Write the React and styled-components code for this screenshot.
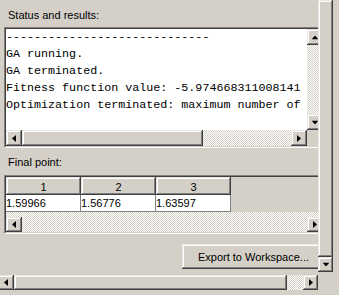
import React from 'react'
import styled, { createGlobalStyle, css } from 'styled-components'

const GlobalStyle = createGlobalStyle`
  html, body {
    margin: 0;
    padding: 0;
    background: #d4d0c8;
  }
  body {
    font-family: "Liberation Sans", Arial, sans-serif;
    font-size: 11px;
    color: #000;
  }
`

const raised = css`
  background: #d4d0c8;
  box-shadow: inset -1px -1px #404040, inset 1px 1px #e8e6e0,
    inset -2px -2px #808080, inset 2px 2px #fff;
`

const dither = css`
  background: repeating-conic-gradient(#fff 0 25%, #d4d0c8 0 50%) 0 0 / 2px 2px;
`

const Window = styled.div`
  width: 339px;
  height: 295px;
  display: grid;
  grid-template-columns: 318px 15px 6px;
  grid-template-rows: 272px 3px 15px 5px;
  background: #d4d0c8;
  overflow: hidden;
`

const Viewport = styled.div`
  grid-column: 1;
  grid-row: 1 / span 2;
  overflow: hidden;
  padding-left: 4px;
  display: flex;
  flex-direction: column;
`

const Label = styled.div`
  margin: ${p => p.$top}px 0 ${p => p.$bottom}px 4px;
  line-height: 13px;
  white-space: nowrap;
`

const Frame = styled.div`
  flex-shrink: 0;
  width: 321px;
  height: ${p => p.$height}px;
  box-sizing: border-box;
  border: 1px solid;
  border-color: #808080 #fff #fff #808080;
`

const FrameInner = styled.div`
  height: 100%;
  box-sizing: border-box;
  border: 1px solid;
  border-color: #404040 #d4d0c8 #d4d0c8 #404040;
  display: grid;
  grid-template-columns: ${p => p.$cols};
  grid-template-rows: ${p => p.$rows};
  background: #d4d0c8;
`

const Console = styled.pre`
  margin: 0;
  padding: 0;
  background: #fff;
  overflow: hidden;
  font-family: "Liberation Mono", "Courier New", monospace;
  font-size: 11.7px;
  line-height: 17px;
  color: #000;
`

const ScrollBar = styled.div`
  display: flex;
  flex-direction: ${p => (p.$vertical ? 'column' : 'row')};
  align-items: ${p => p.$align || 'stretch'};
  ${dither};
  overflow: hidden;
`

const ArrowButton = styled.div`
  ${raised};
  flex-shrink: 0;
  width: ${p => p.$w || 16}px;
  height: ${p => p.$h || 16}px;
  margin-left: ${p => p.$shift || 0}px;
  display: flex;
  align-items: center;
  justify-content: center;
`

const Thumb = styled.div`
  ${raised};
  flex: ${p => (p.$size ? `0 0 ${p.$size}px` : '1 1 auto')};
`

const Track = styled.div`
  flex: 1 1 auto;
`

const Corner = styled.div`
  background: #d4d0c8;
`

const Table = styled.div`
  display: flex;
  flex-direction: column;
  background: #d4d0c8;
`

const Row = styled.div`
  display: flex;
  height: ${p => p.$height}px;
`

const HeaderCell = styled.div`
  ${raised};
  width: 75px;
  display: flex;
  align-items: center;
  justify-content: center;
  padding-top: 1px;
  box-sizing: border-box;
`

const DataCell = styled.div`
  width: 75px;
  box-sizing: border-box;
  background: #fff;
  border-right: 1px solid #808080;
  border-bottom: 1px solid #808080;
  line-height: 16px;
`

const TableScroll = styled(ScrollBar)`
  height: 20px;
`

const Footer = styled.div`
  display: flex;
  margin: 10px 0 0 178px;
`

const Button = styled.div`
  ${raised};
  flex-shrink: 0;
  width: 143px;
  height: 25px;
  display: flex;
  align-items: center;
  justify-content: center;
  white-space: nowrap;
`

const OuterV = styled(ScrollBar)`
  grid-column: 2;
  grid-row: 1;
`

const OuterH = styled(ScrollBar)`
  grid-column: 1;
  grid-row: 3;
`

const turns = { right: 0, down: 90, left: 180, up: 270 }

const Arrow = ({ dir }) => (
  <svg width="4" height="7" viewBox="0 0 4 7" style={{ transform: `rotate(${turns[dir]}deg)` }}>
    <polygon points="0,0 4,3.5 0,7" fill="#000" />
  </svg>
)

const lines = [
  '-----------------------------',
  'GA running.',
  'GA terminated.',
  'Fitness function value: -5.974668311008141',
  'Optimization terminated: maximum number of',
]

const finalPoint = ['1.59966', '1.56776', '1.63597']

export default function App() {
  return (
    <>
      <GlobalStyle />
      <Window>
        <Viewport>
          <Label $top={9} $bottom={5}>Status and results:</Label>
          <Frame $height={121}>
            <FrameInner $cols="301px 16px" $rows="101px 16px">
              <Console>{lines.join('\n')}</Console>
              <ScrollBar $vertical>
                <ArrowButton><Arrow dir="up" /></ArrowButton>
                <Track />
                <ArrowButton><Arrow dir="down" /></ArrowButton>
              </ScrollBar>
              <ScrollBar>
                <ArrowButton><Arrow dir="left" /></ArrowButton>
                <Thumb $size={181} />
                <Track />
                <ArrowButton><Arrow dir="right" /></ArrowButton>
              </ScrollBar>
              <Corner />
            </FrameInner>
          </Frame>

          <Label $top={8} $bottom={6}>Final point:</Label>
          <Frame $height={59}>
            <FrameInner $cols="1fr" $rows="55px">
              <Table>
                <Row $height={18}>
                  {finalPoint.map((_, i) => (
                    <HeaderCell key={i}>{i + 1}</HeaderCell>
                  ))}
                </Row>
                <Row $height={17}>
                  {finalPoint.map(v => (
                    <DataCell key={v}>{v}</DataCell>
                  ))}
                </Row>
                <TableScroll $align="flex-end">
                  <ArrowButton $h={15}><Arrow dir="left" /></ArrowButton>
                  <Track />
                  <ArrowButton $h={15}><Arrow dir="right" /></ArrowButton>
                </TableScroll>
              </Table>
            </FrameInner>
          </Frame>

          <Footer>
            <Button>Export to Workspace...</Button>
          </Footer>
        </Viewport>

        <OuterV $vertical>
          <Thumb />
          <ArrowButton $w={15} $h={15}><Arrow dir="down" /></ArrowButton>
        </OuterV>

        <OuterH>
          <ArrowButton $w={16} $h={15} $shift={-2}><Arrow dir="left" /></ArrowButton>
          <Thumb $size={273} />
          <Track />
          <ArrowButton $w={15} $h={15}><Arrow dir="right" /></ArrowButton>
        </OuterH>
      </Window>
    </>
  )
}
